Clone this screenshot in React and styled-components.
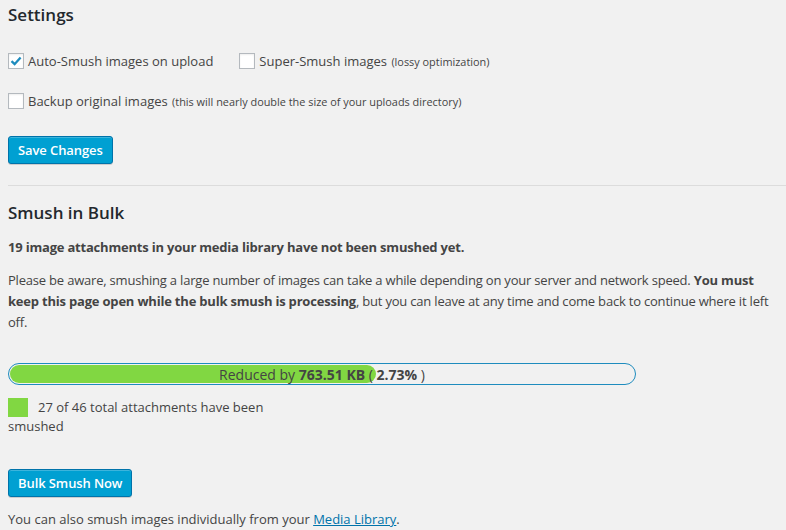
import React from 'react'
import styled, { createGlobalStyle } from 'styled-components'

const GlobalStyle = createGlobalStyle`
  html, body {
    margin: 0;
    background: #f1f1f1;
  }
  body {
    font-family: "Open Sans", "Liberation Sans", sans-serif;
    font-size: 13px;
    color: #444;
  }
`

const Page = styled.div`
  padding: 0 0 0 8px;
  width: 778px;
  overflow: hidden;
`

const Heading = styled.h2`
  margin: 0;
  padding: ${({ $top }) => $top || 4}px 0 0;
  font-size: 17px;
  font-weight: 600;
  line-height: 22px;
  color: #23282d;
`

const OptionRow = styled.div`
  display: flex;
  align-items: center;
  gap: 26px;
  margin-top: ${({ $top }) => $top}px;
  height: 20px;
`

const Option = styled.label`
  display: flex;
  align-items: center;
  gap: 4px;
  font-size: 13px;
  color: #444;
  white-space: nowrap;
`

const Box = styled.span`
  width: 16px;
  height: 16px;
  box-sizing: border-box;
  border: 1px solid #b4b9be;
  background: #fff;
  box-shadow: inset 0 1px 2px rgba(0, 0, 0, 0.07);
  display: flex;
  align-items: center;
  justify-content: center;
`

const Small = styled.small`
  font-size: 10.9px;
  margin-left: 1px;
`

const Button = styled.button`
  display: block;
  margin-top: ${({ $top }) => $top}px;
  height: 28px;
  padding: 0 9px 1px;
  border: 1px solid #0073aa;
  border-radius: 3px;
  background: #00a0d2;
  box-shadow: inset 0 1px 0 rgba(120, 200, 230, 0.5), 0 1px 0 rgba(0, 0, 0, 0.15);
  color: #fff;
  font-family: "Open Sans", "Liberation Sans", sans-serif;
  font-size: 13px;
  font-weight: 600;
  letter-spacing: -0.1px;
  line-height: 26px;
`

const Rule = styled.hr`
  margin: 21px 0 0;
  border: 0;
  border-top: 1px solid #dcdcdc;
`

const Text = styled.p`
  margin: ${({ $top }) => $top}px 0 0;
  font-size: 13px;
  line-height: ${({ $lh }) => $lh || 22}px;
  color: #444;
  font-weight: ${({ $bold }) => ($bold ? 700 : 400)};
  letter-spacing: ${({ $tight }) => ($tight ? '-0.2px' : 'normal')};
  b {
    font-weight: 700;
  }
`

const Bar = styled.div`
  position: relative;
  margin-top: 30px;
  width: 628px;
  height: 22px;
  box-sizing: border-box;
  border: 1px solid #1e8cbe;
  border-radius: 11px;
  padding: 1px;
`

const Fill = styled.div`
  height: 100%;
  background: #81d742;
  border-radius: 10px;
`

const BarLabel = styled.div`
  position: absolute;
  inset: 0;
  display: flex;
  align-items: center;
  justify-content: center;
  font-size: 14px;
  color: #444;
  white-space: pre;
  b {
    font-weight: 700;
  }
`

const Stats = styled.div`
  margin-top: 13px;
  width: 280px;
  font-size: 13px;
  line-height: 19px;
  color: #444;
`

const Swatch = styled.span`
  display: inline-block;
  width: 20px;
  height: 19px;
  background: #81d742;
  margin-right: 10px;
  vertical-align: top;
`

const Link = styled.a`
  color: #0073aa;
  text-decoration: underline;
`

const Check = () => (
  <svg width="14" height="14" viewBox="0 0 14 14">
    <path d="M2.5 7.2 L5.6 10.2 L11.6 3.4" fill="none" stroke="#1e8cbe" strokeWidth="2.3" />
  </svg>
)

const App = () => {
  const done = 27
  const total = 46
  return (
    <>
      <GlobalStyle />
      <Page>
        <Heading>Settings</Heading>
        <OptionRow $top={25}>
          <Option>
            <Box><Check /></Box>
            <span>Auto-Smush images on upload</span>
          </Option>
          <Option>
            <Box />
            <span>Super-Smush images <Small>(lossy optimization)</Small></span>
          </Option>
        </OptionRow>
        <OptionRow $top={20}>
          <Option>
            <Box />
            <span>Backup original images <Small>(this will nearly double the size of your uploads directory)</Small></span>
          </Option>
        </OptionRow>
        <Button $top={25}>Save Changes</Button>
        <Rule />
        <Heading $top={16}>Smush in Bulk</Heading>
        <Text $top={12} $bold $tight>19 image attachments in your media library have not been smushed yet.</Text>
        <Text $top={12} $lh={21} $tight>
          Please be aware, smushing a large number of images can take a while depending on your server and network speed.{' '}
          <b>You must keep this page open while the bulk smush is processing</b>, but you can leave at any time and come back to continue where it left off.
        </Text>
        <Bar>
          <Fill style={{ width: `${(done / total) * 100}%` }} />
          <BarLabel>
            Reduced by <b>763.51 KB</b> ( <b>2.73%</b> )
          </BarLabel>
        </Bar>
        <Stats>
          <Swatch />
          {`${done} of ${total} total attachments have been smushed`}
        </Stats>
        <Button $top={33}>Bulk Smush Now</Button>
        <Text $top={11}>
          You can also smush images individually from your <Link href="#">Media Library</Link>.
        </Text>
      </Page>
    </>
  )
}

export default App
